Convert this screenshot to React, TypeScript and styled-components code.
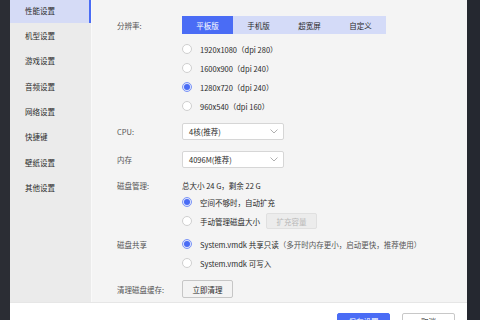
import React from 'react';
import styled, { createGlobalStyle } from 'styled-components';

const Global = createGlobalStyle`
  html, body { margin: 0; padding: 0; width: 480px; height: 320px; overflow: hidden; background: #2b2d34; }
  #root { height: 320px; }
  * { box-sizing: border-box; }
`;

const Screen = styled.div`
  display: flex;
  width: 480px;
  height: 320px;
  overflow: hidden;
  font-family: "Noto Sans CJK SC", "Noto Sans", sans-serif;
  font-size: 7.5px;
  color: #2a2a2a;
`;

const EdgeLeft = styled.div`
  width: 10px;
  flex: none;
  background: #2b2d34;
`;

const EdgeRight = styled.div`
  width: 13px;
  flex: none;
  background: #252830;
`;

const Window = styled.div`
  flex: 1;
  min-width: 0;
  display: flex;
  flex-direction: column;
`;

const Body = styled.div`
  display: flex;
  height: 302px;
  flex: none;
`;

const Sidebar = styled.nav`
  width: 82px;
  flex: none;
  background: #ebebeb;
  border-right: 1px solid #f9f9f9;
  overflow: hidden;
`;

const NavList = styled.ul`
  list-style: none;
  margin: -2.7px 0 0;
  padding: 0;
`;

const NavItem = styled.li<{ $active?: boolean }>`
  height: 25.4px;
  display: flex;
  align-items: center;
  padding-left: 15px;
  color: #2a2a2a;
  background: ${(p) => (p.$active ? '#d5dbf6' : 'transparent')};
  border-right: 2px solid ${(p) => (p.$active ? '#4a6cf5' : 'transparent')};
`;

const Main = styled.main`
  flex: 1;
  background: #f4f4f4;
  padding: 16px 0 0 25px;
  display: flex;
  flex-direction: column;
`;

const Row = styled.div<{ $h: number; $mt?: number }>`
  display: flex;
  align-items: center;
  height: ${(p) => p.$h}px;
  margin-top: ${(p) => p.$mt ?? 0}px;
  flex: none;
`;

const Label = styled.span`
  width: 65px;
  flex: none;
  color: #555;
`;

const Tabs = styled.div`
  display: flex;
  background: #d4dbf8;
  height: 18px;
`;

const Tab = styled.div<{ $active?: boolean }>`
  width: 51px;
  display: flex;
  align-items: center;
  justify-content: center;
  background: ${(p) => (p.$active ? '#4a6cf5' : 'transparent')};
  color: ${(p) => (p.$active ? '#fff' : '#2a2a2a')};
`;

const RadioRow = styled.label`
  display: flex;
  align-items: center;
  gap: 8px;
  color: #2a2a2a;
`;

const RadioDot = styled.span<{ $checked?: boolean }>`
  width: 10px;
  height: 10px;
  border-radius: 50%;
  flex: none;
  display: flex;
  align-items: center;
  justify-content: center;
  border: 1px solid ${(p) => (p.$checked ? '#7c95f6' : '#cfcfcf')};
  background: ${(p) => (p.$checked ? '#dde4fd' : '#fff')};
  &::after {
    content: '';
    width: 6px;
    height: 6px;
    border-radius: 50%;
    background: ${(p) => (p.$checked ? '#4a6cf5' : 'transparent')};
  }
`;

const Hint = styled.span`
  color: #555;
`;

const Select = styled.div`
  width: 102px;
  height: 17px;
  background: #fff;
  border: 1px solid #d6d6d6;
  border-radius: 2px;
  display: flex;
  align-items: center;
  justify-content: space-between;
  padding: 0 5px 0 6px;
  color: #2a2a2a;
`;

const Button = styled.button<{ $disabled?: boolean; $w: number; $h: number; $ml?: number }>`
  width: ${(p) => p.$w}px;
  height: ${(p) => p.$h}px;
  margin-left: ${(p) => p.$ml ?? 0}px;
  padding: 0;
  font: inherit;
  border-radius: 2px;
  border: 1px solid ${(p) => (p.$disabled ? '#e0e0e0' : '#c6c6c6')};
  background: ${(p) => (p.$disabled ? '#ececec' : '#f3f3f3')};
  color: ${(p) => (p.$disabled ? '#b8b8b8' : '#2a2a2a')};
`;

const Footer = styled.footer`
  height: 40px;
  flex: none;
  background: #fff;
  border-top: 1px solid #e6e6e6;
  display: flex;
  justify-content: flex-end;
  align-items: flex-start;
  gap: 12px;
  padding: 10px 12px 0 0;
`;

const FooterButton = styled.button<{ $primary?: boolean }>`
  width: 53px;
  height: 22px;
  padding: 0 0 5px;
  font: inherit;
  border-radius: 2px;
  border: 1px solid ${(p) => (p.$primary ? '#4a6cf5' : '#c8c8c8')};
  background: ${(p) => (p.$primary ? '#4a6cf5' : '#fff')};
  color: ${(p) => (p.$primary ? '#fff' : '#2a2a2a')};
`;

const Chevron = () => (
  <svg width="8" height="5" viewBox="0 0 8 5">
    <polyline points="0.5,0.5 4,4 7.5,0.5" fill="none" stroke="#b0b0b0" strokeWidth="1" />
  </svg>
);

const Radio = ({ checked, children }: { checked?: boolean; children: React.ReactNode }) => (
  <RadioRow>
    <RadioDot $checked={checked} />
    <span>{children}</span>
  </RadioRow>
);

const navItems = ['性能设置', '机型设置', '游戏设置', '音频设置', '网络设置', '快捷键', '壁纸设置', '其他设置'];
const tabs = ['平板版', '手机版', '超宽屏', '自定义'];
const resolutions = [
  '1920x1080（dpi 280）',
  '1600x900（dpi 240）',
  '1280x720（dpi 240）',
  '960x540（dpi 160）',
];

export default function App() {
  return (
    <>
      <Global />
      <Screen>
        <EdgeLeft />
        <Window>
          <Body>
            <Sidebar>
              <NavList>
                {navItems.map((n, i) => (
                  <NavItem key={n} $active={i === 0}>
                    {n}
                  </NavItem>
                ))}
              </NavList>
            </Sidebar>
            <Main>
              <Row $h={18}>
                <Label>分辨率:</Label>
                <Tabs>
                  {tabs.map((t, i) => (
                    <Tab key={t} $active={i === 0}>
                      {t}
                    </Tab>
                  ))}
                </Tabs>
              </Row>
              {resolutions.map((r, i) => (
                <Row key={r} $h={19} $mt={i === 0 ? 5.5 : 0}>
                  <Label />
                  <Radio checked={i === 2}>{r}</Radio>
                </Row>
              ))}
              <Row $h={17} $mt={7}>
                <Label>CPU:</Label>
                <Select>
                  <span>4核(推荐)</span>
                  <Chevron />
                </Select>
              </Row>
              <Row $h={17} $mt={11}>
                <Label>内存</Label>
                <Select>
                  <span>4096M(推荐)</span>
                  <Chevron />
                </Select>
              </Row>
              <Row $h={15} $mt={10}>
                <Label>磁盘管理:</Label>
                <span>总大小 24 G，剩余 22 G</span>
              </Row>
              <Row $h={19}>
                <Label />
                <Radio checked>空间不够时，自动扩充</Radio>
              </Row>
              <Row $h={19}>
                <Label />
                <Radio>手动管理磁盘大小</Radio>
                <Button $disabled $w={51} $h={16} $ml={6}>
                  扩充容量
                </Button>
              </Row>
              <Row $h={19} $mt={4}>
                <Label>磁盘共享</Label>
                <Radio checked>
                  System.vmdk 共享只读<Hint>（多开时内存更小，启动更快，推荐使用）</Hint>
                </Radio>
              </Row>
              <Row $h={19}>
                <Label />
                <Radio>System.vmdk 可写入</Radio>
              </Row>
              <Row $h={18} $mt={7.5}>
                <Label>清理磁盘缓存:</Label>
                <Button $w={51} $h={18}>
                  立即清理
                </Button>
              </Row>
            </Main>
          </Body>
          <Footer>
            <FooterButton $primary>保存设置</FooterButton>
            <FooterButton>取消</FooterButton>
          </Footer>
        </Window>
        <EdgeRight />
      </Screen>
    </>
  );
}
